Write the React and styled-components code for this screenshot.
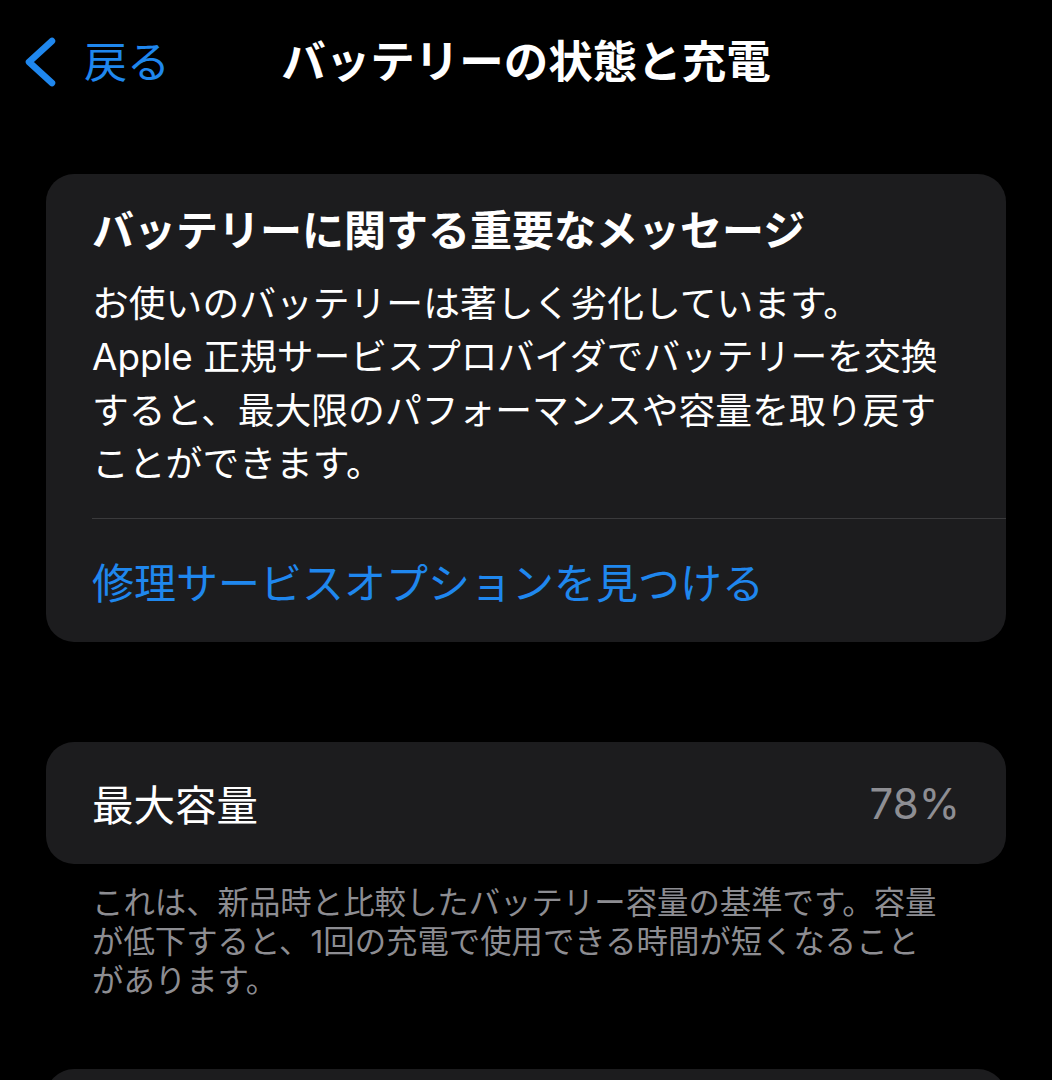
import React from "react";
import styled, { createGlobalStyle } from "styled-components";

const GlobalStyle = createGlobalStyle`
  html, body {
    margin: 0;
    padding: 0;
    background: #000;
  }
  body {
    font-family: "Inter", "Noto Sans CJK JP", sans-serif;
    color: #fff;
    -webkit-font-smoothing: antialiased;
  }
`;

const Page = styled.div`
  width: 1052px;
  height: 1080px;
  overflow: hidden;
  background: #000;
`;

const NavBar = styled.div`
  position: relative;
  height: 124px;
  display: flex;
  align-items: center;
  justify-content: center;
`;

const BackButton = styled.div`
  position: absolute;
  left: 24px;
  top: 36px;
  display: flex;
  align-items: center;
  gap: 26px;
  color: #1f87ee;
  font-size: 43px;
  line-height: 52px;
`;

const NavTitle = styled.h1`
  margin: 0;
  font-size: 44.5px;
  line-height: 52px;
  font-weight: 700;
  color: #fff;
`;

const Content = styled.div`
  display: flex;
  flex-direction: column;
  padding: 50px 46px 0;
`;

const Card = styled.section`
  flex-shrink: 0;
  background: #1c1c1e;
  border-radius: 28px;
  overflow: hidden;
  margin-top: ${(p) => p.$gap || 0}px;
  min-height: ${(p) => p.$minHeight || 0}px;
`;

const CardBody = styled.div`
  padding: 32px 46px 28px;
  display: flex;
  flex-direction: column;
  gap: 21px;
`;

const CardTitle = styled.h2`
  margin: 0;
  font-size: 42px;
  line-height: 50px;
  font-weight: 700;
`;

const Message = styled.p`
  margin: 0;
  font-size: 36.8px;
  line-height: 53.3px;
  color: #fff;
  white-space: nowrap;
`;

const Divider = styled.div`
  height: 1px;
  background: #3a3a3c;
  margin-left: 46px;
`;

const LinkRow = styled.div`
  height: 123px;
  display: flex;
  align-items: center;
  padding: 6px 46px 0;
  color: #1f87ee;
  font-size: 42px;
  line-height: 50px;
  box-sizing: border-box;
`;

const ValueRow = styled.div`
  height: 122px;
  display: flex;
  align-items: center;
  justify-content: space-between;
  padding: 0 46px;
  font-size: 41.5px;
`;

const RowValue = styled.span`
  color: #8e8e93;
  font-size: 42px;
`;

const Footnote = styled.p`
  flex-shrink: 0;
  margin: 20px 46px 0;
  font-size: 31.4px;
  line-height: 38.8px;
  color: #8d8d92;
  white-space: nowrap;
`;

const Chevron = () => (
  <svg width="34" height="52" viewBox="0 0 34 52">
    <path
      d="M28 5 L5 26 L28 47"
      fill="none"
      stroke="#1f87ee"
      strokeWidth="6.5"
      strokeLinecap="round"
      strokeLinejoin="round"
    />
  </svg>
);

export default function App() {
  return (
    <Page>
      <GlobalStyle />
      <NavBar>
        <BackButton>
          <Chevron />
          <span>戻る</span>
        </BackButton>
        <NavTitle>バッテリーの状態と充電</NavTitle>
      </NavBar>
      <Content>
        <Card>
          <CardBody>
            <CardTitle>バッテリーに関する重要なメッセージ</CardTitle>
            <Message>
              お使いのバッテリーは著しく劣化しています。
              <br />
              Apple 正規サービスプロバイダでバッテリーを交換
              <br />
              すると、最大限のパフォーマンスや容量を取り戻す
              <br />
              ことができます。
            </Message>
          </CardBody>
          <Divider />
          <LinkRow>修理サービスオプションを見つける</LinkRow>
        </Card>
        <Card $gap={100}>
          <ValueRow>
            <span>最大容量</span>
            <RowValue>78%</RowValue>
          </ValueRow>
        </Card>
        <Footnote>
          これは、新品時と比較したバッテリー容量の基準です。容量
          <br />
          が低下すると、1回の充電で使用できる時間が短くなること
          <br />
          があります。
        </Footnote>
        <Card $gap={68} $minHeight={120} />
      </Content>
    </Page>
  );
}
